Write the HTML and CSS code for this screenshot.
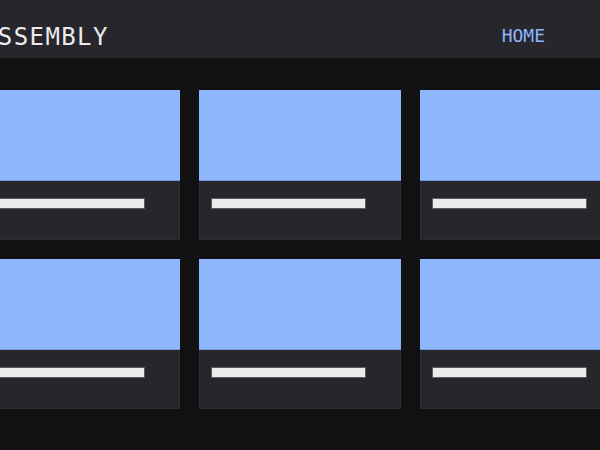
FILE: index.html
```html
<!DOCTYPE html>
<html lang="en">
<head>
<meta charset="utf-8">
<title>Assembly</title>
<link rel="stylesheet" href="styles.css">
</head>
<body>
<header class="site-header">
  <div class="header-inner">
    <h1 class="logo">ASSEMBLY</h1>
    <nav class="nav"><a class="nav-link" href="#">HOME</a></nav>
  </div>
</header>
<main class="main">
  <div class="grid">
    <article class="card"><div class="card-image"></div><div class="card-body"><div class="card-bar"></div></div></article>
    <article class="card"><div class="card-image"></div><div class="card-body"><div class="card-bar"></div></div></article>
    <article class="card"><div class="card-image"></div><div class="card-body"><div class="card-bar"></div></div></article>
    <article class="card"><div class="card-image"></div><div class="card-body"><div class="card-bar"></div></div></article>
    <article class="card"><div class="card-image"></div><div class="card-body"><div class="card-bar"></div></div></article>
    <article class="card"><div class="card-image"></div><div class="card-body"><div class="card-bar"></div></div></article>
  </div>
</main>
</body>
</html>
```
FILE: styles.css
```css
* { box-sizing: border-box; }
html, body {
  margin: 0;
  padding: 0;
  background: #111113;
  overflow: hidden;
  height: 100%;
}
body {
  font-family: "DejaVu Sans Mono", "Liberation Mono", monospace;
}
.site-header {
  background: #27272b;
  height: 58px;
  padding-top: 16px;
  display: flex;
  justify-content: center;
}
.header-inner {
  flex: 0 0 644px;
  width: 644px;
  display: flex;
  align-items: center;
  justify-content: space-between;
  padding: 0 77px 0 4px;
}
.logo {
  margin: 0;
  font-size: 24px;
  line-height: 1;
  font-weight: normal;
  letter-spacing: 1.4px;
  color: #ececec;
}
.nav {
  display: flex;
  align-items: center;
}
.nav-link {
  font-size: 18px;
  line-height: 1;
  color: #8db6fd;
  text-decoration: none;
  position: relative;
  top: -1px;
}
.main {
  display: flex;
  justify-content: center;
  padding-top: 32px;
}
.grid {
  flex: 0 0 644px;
  width: 644px;
  display: grid;
  grid-template-columns: repeat(3, 202px);
  grid-auto-rows: 150px;
  gap: 19px 19px;
}
.card {
  background: #27272b;
  display: flex;
  flex-direction: column;
  border: 1px solid #2c2c31;
}
.card-image {
  height: 91px;
  margin: -1px -1px 0;
  background: #8db6fd;
  border-bottom: 1px solid #7297d6;
}
.card-body {
  flex: 1;
  padding: 17px 0 0 11px;
}
.card-bar {
  width: 155px;
  height: 11px;
  background: #ebebeb;
  border: 1px solid #5c5c60;
}
```
